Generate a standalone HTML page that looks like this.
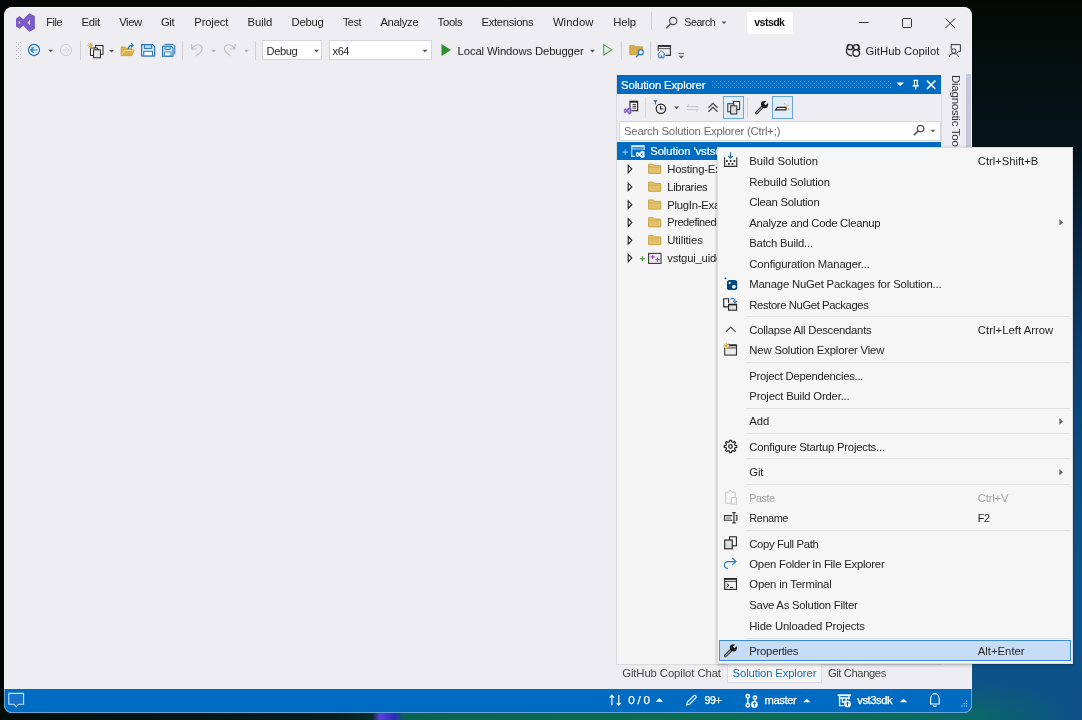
<!DOCTYPE html>
<html><head><meta charset="utf-8"><title>vstsdk - Microsoft Visual Studio</title>
<style>
html,body{margin:0;padding:0}
body{width:1082px;height:720px;position:relative;overflow:hidden;font:12px "Liberation Sans",sans-serif;
background:linear-gradient(to bottom,#030a06 0,#040d0a 40px,#05131a 150px,#082a4a 250px,#0b3f70 350px,#0c4a80 440px,#0e548c 600px,#0d5088 720px);}
.abs{position:absolute}
.t{position:absolute;transform-origin:0 0;white-space:pre;line-height:16px;font-size:11px}
svg{position:absolute;overflow:visible}
#win{position:absolute;left:0;top:0;width:1082px;height:720px;background:#eeeef2;clip-path:inset(7px 110px 7px 4px round 8px)}
.layer{position:absolute;left:0;top:0;width:1082px;height:720px;will-change:transform}
.sep{position:absolute;width:1px;background:#cfcfd8}
.msep{position:absolute;left:746px;width:324px;height:1px;background:#e2e2e5}
</style></head><body>
<div class="abs" style="left:0;top:0;width:14px;height:720px;background:#020705"></div>
<div class="abs" style="left:0;top:706px;width:990px;height:14px;background:linear-gradient(to right,#020d0a 0,#04201e 340px,#062c2c 372px,#5a40d6 380px,#2c2cba 394px,#0a6350 404px,#0b6c52 700px,#0a6a5c 900px,#0a6668 972px,rgba(10,98,112,.0) 990px)"></div>
<div class="abs" style="left:940px;top:640px;width:142px;height:80px;background:radial-gradient(ellipse 110px 40px at 30px 80px,rgba(10,104,100,.95) 0,rgba(10,100,110,.6) 50%,rgba(12,90,140,0) 100%)"></div>
<div id="win">
<!-- status bar -->
<div class="abs" style="left:4px;top:689px;width:968px;height:24px;background:#006cc1"></div>
<!-- solution explorer panel -->
<div class="abs" style="left:616px;top:75px;width:1px;height:590px;background:#dadae2"></div>
<div class="abs" style="left:617px;top:141px;width:324px;height:523px;background:#f5f5f5"></div>
<div class="abs" style="left:617px;top:664px;width:325px;height:1px;background:#dadae2"></div>
<div class="abs" style="left:941px;top:94px;width:1px;height:570px;background:#dadae2"></div>
<div class="abs" style="left:617px;top:75px;width:324px;height:19px;background:#006cc1"></div>
<div class="abs" style="left:619px;top:121px;width:320px;height:18px;background:#fff;border:1px solid #d4d5e0"></div>
<div class="abs" style="left:617px;top:142px;width:324px;height:18px;background:#006cc1"></div>
<!-- diag strip -->
<div class="abs" style="left:966px;top:74px;width:5px;height:100px;background:#c6c8da"></div>
<span class="t" style="left:964.2px;top:75.2px;color:#333;font-size:11.6px;transform-origin:0 0;transform:rotate(90deg);letter-spacing:-0.3px;will-change:transform">Diagnostic Tools</span>
<!-- menu title pieces -->
<div class="sep" style="left:651px;top:12px;height:18px"></div>
<div class="abs" style="left:747px;top:12px;width:46px;height:22px;background:#fff;border-radius:3px"></div>
<!-- toolbar combos -->
<div class="abs" style="left:262px;top:40px;width:60px;height:20px;background:#fff;border:1px solid #d4d5e0;box-sizing:border-box"></div>
<div class="abs" style="left:329px;top:40px;width:103px;height:20px;background:#fff;border:1px solid #d4d5e0;box-sizing:border-box"></div>
<div class="sep" style="left:80px;top:41px;height:19px"></div>
<div class="sep" style="left:182px;top:41px;height:19px"></div>
<div class="sep" style="left:255px;top:41px;height:19px"></div>
<div class="sep" style="left:621px;top:41px;height:19px"></div>
<div class="sep" style="left:650px;top:41px;height:19px"></div>
<!-- bottom tab -->
<div class="abs" style="left:727px;top:664px;width:95px;height:19px;background:#f5f5f5;border:1px solid #dadae2;border-top:none;box-sizing:border-box"></div>
<svg width="1082" height="720" viewBox="0 0 1082 720" style="left:0;top:0" fill="none" stroke-linecap="butt">
<defs>
<pattern id="dots" x="712" y="81" width="4" height="4" patternUnits="userSpaceOnUse"><rect x="0" y="0" width="1" height="1" fill="#5aa9ea"/><rect x="2" y="2" width="1" height="1" fill="#5aa9ea"/></pattern>
<pattern id="grip" x="16" y="42" width="4" height="4" patternUnits="userSpaceOnUse"><rect x="0" y="0" width="1" height="1" fill="#b4b4c0"/><rect x="2" y="2" width="1" height="1" fill="#b4b4c0"/></pattern>
</defs>
<!-- VS logo -->
<path fill="#7b5cc6" fill-rule="evenodd" d="M29.3,13.2 L34.9,16 V28.9 L29.3,31.7 L23.3,25.7 L19.6,28.8 L16,26.6 V18.7 L19.6,16.1 L23.3,19.3 Z M18.7,20.9 V24.3 L20.6,22.6 Z M27.5,22.5 L29.9,19.8 V25.2 Z"/>
<!-- window buttons -->
<path d="M859,22.5 H868.5" stroke="#333" stroke-width="1"/>
<rect x="902.5" y="18.5" width="9" height="9" rx="1" stroke="#333" stroke-width="1"/>
<path d="M945.5,18.5 L955,28 M955,18.5 L945.5,28" stroke="#333" stroke-width="1"/>
<!-- menubar search -->
<circle cx="673.2" cy="21" r="3.6" stroke="#444" stroke-width="1.1"/><path d="M670.6,23.8 L666.3,28.2" stroke="#444" stroke-width="1.3"/>
<path d="M721.5,21.5 h5 l-2.5,2.6 z" fill="#555"/>
<!-- toolbar grip -->
<rect x="16" y="42" width="5" height="17" fill="url(#grip)"/>
<!-- back / forward -->
<circle cx="34" cy="50" r="5.6" fill="#dcefff" stroke="#1c6db3" stroke-width="1.1"/>
<path d="M37.3,50 H31 M33.6,47.2 L30.8,50 L33.6,52.8" stroke="#1c6db3" stroke-width="1.1"/>
<path d="M48.2,49.7 h5 l-2.5,2.6 z" fill="#555"/>
<circle cx="66" cy="50" r="5.6" stroke="#c9c9d0" stroke-width="1"/>
<path d="M62.8,50 H69 M66.5,47.4 L69.1,50 L66.5,52.6" stroke="#d0d0d6" stroke-width="1"/>
<!-- new item -->
<rect x="95.5" y="45.5" width="7.5" height="8.8" fill="#f6f6f6" stroke="#2b2b2b" stroke-width="1"/>
<rect x="90.5" y="48" width="7" height="7.5" fill="#f6f6f6" stroke="#2b2b2b" stroke-width="1"/>
<rect x="93.5" y="49.8" width="7" height="8" fill="#e4e4e8" stroke="#2b2b2b" stroke-width="1"/>
<path d="M90.3,42.6 V48.6 M87.3,45.6 H93.3 M88.2,43.5 L92.4,47.7 M92.4,43.5 L88.2,47.7" stroke="#d9b233" stroke-width="1"/>
<path d="M109,50 h5 l-2.5,2.6 z" fill="#555"/>
<!-- open folder -->
<path d="M121.2,55.6 V47 H125.2 L126.2,48.3 H131.5 V50 H134.3 L131.8,55.6 Z" fill="#dcb247" stroke="#c59a2c" stroke-width=".8"/>
<path d="M122,55 L124.3,50.6 H133.6" stroke="#f3dc98" stroke-width=".9"/>
<path d="M128.2,49 C128.4,46.6 130,45.3 132.6,45.3 M131,43.3 L133.2,45.3 L131,47.3" stroke="#2a74b8" stroke-width="1.2"/>
<!-- save -->
<path d="M141.6,44.6 H152.6 L154.7,46.7 V56 H141.6 Z" fill="#d6e9fa" stroke="#1c6db3" stroke-width="1.1"/>
<rect x="144.3" y="44.8" width="7.4" height="3.6" fill="#bcd9f3" stroke="#1c6db3" stroke-width=".9"/>
<rect x="143.8" y="51.3" width="8.6" height="4.6" fill="#f4f9ff" stroke="#1c6db3" stroke-width=".9"/>
<!-- save all -->
<path d="M164.6,44.4 H173 L174.8,46.2 V54.2" stroke="#1c6db3" stroke-width="1"/>
<path d="M162.6,46.3 H171.2 L173,48.1 V56.2 H162.6 Z" fill="#d6e9fa" stroke="#1c6db3" stroke-width="1.1"/>
<rect x="165" y="46.5" width="5.2" height="3" fill="#bcd9f3" stroke="#1c6db3" stroke-width=".8"/>
<rect x="164.6" y="52" width="6.4" height="4" fill="#f4f9ff" stroke="#1c6db3" stroke-width=".8"/>
<!-- undo / redo -->
<path d="M191.6,44 V49 H196.6 M192,48.6 C194,45.2 198.4,43.6 200.8,45.6 C203.2,47.8 202.4,50.4 200,52.8 L196,56.2" stroke="#bdbdc6" stroke-width="1.1"/>
<path d="M211,49.8 h5 l-2.5,2.6 z" fill="#b4b4bc"/>
<path d="M235,44 V49 H230 M234.6,48.6 C232.6,45.2 228.2,43.6 225.8,45.6 C223.4,47.8 224.2,50.4 226.6,52.8 L230.6,56.2" stroke="#bdbdc6" stroke-width="1.1"/>
<path d="M244,49.8 h5 l-2.5,2.6 z" fill="#b4b4bc"/>
<!-- combo arrows -->
<path d="M314,49.8 h5 l-2.5,2.6 z" fill="#555"/>
<path d="M422.5,49.8 h5 l-2.5,2.6 z" fill="#555"/>
<!-- play -->
<path d="M441.5,44 L451,50 L441.5,56 Z" fill="#2f8f2f"/>
<path d="M590,49.8 h5 l-2.5,2.6 z" fill="#555"/>
<path d="M603.7,44.6 L612,49.8 L603.7,55 Z" fill="#e2f2e2" stroke="#58a058" stroke-width="1.1"/>
<!-- folder search -->
<path d="M629.8,54.6 V45.4 H634.2 L635.4,46.8 H642.4 V54.6 Z" fill="#dcae4e" stroke="#c9993a" stroke-width=".8"/>
<path d="M630.4,48.2 H642" stroke="#c9993a" stroke-width=".7"/>
<circle cx="640.8" cy="52.2" r="2.5" fill="#e6f2fc" stroke="#2a78c4" stroke-width="1.2"/><path d="M639,54 L636,57.2" stroke="#2a78c4" stroke-width="1.3"/>
<!-- window home -->
<path d="M658.2,45.5 H670.4 V55.4 H665.5 M658.2,45.5 V51" stroke="#333" stroke-width="1.1"/>
<path d="M658.2,46 H670.4" stroke="#333" stroke-width="2"/>
<path d="M658.6,48.6 H670" stroke="#333" stroke-width=".8"/>
<path d="M661.4,50.8 L665,54.2 H664 V57.8 H658.8 V54.2 H657.8 Z" fill="#e6f2fc" stroke="#2a78c4" stroke-width="1"/>
<rect x="660.6" y="55.4" width="1.6" height="2.4" fill="#2a78c4"/>
<path d="M678.4,53.6 H684" stroke="#666" stroke-width="1"/><path d="M678.4,55.8 h5.6 l-2.8,3 z" fill="#666"/>
<!-- copilot -->
<path d="M849.6,44.6 C847.4,44.6 846.8,46.2 847.2,48.2 C846.4,49.4 846.2,51 846.6,52.6 C847.4,54.6 849.6,55.6 852,55.8 M856.6,44.6 C858.8,44.6 859.4,46.2 859,48.2 C859.4,48.8 859.6,49.2 859.7,49.8" stroke="#2b2b2b" stroke-width="1.35"/>
<rect x="847.6" y="44.6" width="5" height="5" rx="2.2" stroke="#2b2b2b" stroke-width="1.35"/>
<rect x="853.6" y="44.6" width="5" height="5" rx="2.2" stroke="#2b2b2b" stroke-width="1.35"/>
<circle cx="856.2" cy="53" r="3.3" fill="#fafafc" stroke="#2b2b2b" stroke-width="1.35"/>
<!-- feedback person -->
<path d="M951.2,49.4 V44.6 H960.4 V51.6 H958.4 L956.8,53.4" stroke="#333" stroke-width="1"/>
<circle cx="953.8" cy="51" r="2.2" fill="#eeeef2" stroke="#333" stroke-width="1"/>
<path d="M949,57 C950,54.2 951.8,53.6 953.8,53.6 C955.8,53.6 957.6,54.2 958.6,57" stroke="#333" stroke-width="1"/>
<!-- SE title -->
<rect x="712" y="81" width="180" height="7" fill="url(#dots)"/>
<path d="M896.6,82.5 h7.4 l-3.7,3.8 z" fill="#fff"/>
<path d="M913.6,80.4 H918 M914.4,80.4 V85.6 M917.2,80.4 V85.6 M912.6,85.8 H919 M915.8,85.8 V89.6" stroke="#fff" stroke-width="1.2"/>
<path d="M927,80.6 L935.4,89 M935.4,80.6 L927,89" stroke="#fff" stroke-width="1.5"/>
<!-- SE toolbar -->
<rect x="630" y="101.3" width="7.6" height="9.4" fill="#f6f6f6" stroke="#222" stroke-width="1.1"/>
<path d="M630,101.8 H637.6" stroke="#222" stroke-width="1.8"/>
<path d="M632.6,104.6 H636 M632.6,106.4 H636 M632.6,108.2 H636" stroke="#222" stroke-width=".9"/>
<path fill="#8a5fd0" fill-rule="evenodd" stroke="#eeeef2" stroke-width="1.2" paint-order="stroke" transform="translate(623.9,107.1) scale(.4) translate(-16,-13.2)" d="M29.3,13.2 L34.9,16 V28.9 L29.3,31.7 L23.3,25.7 L19.6,28.8 L16,26.6 V18.7 L19.6,16.1 L23.3,19.3 Z M18.4,20.2 V25 L21.2,22.6 Z M26.6,22.5 L30.2,18.6 V26.4 Z"/>
<path d="M645.5,97 V118" stroke="#d6d6de" stroke-width="1"/>
<circle cx="660.9" cy="108.8" r="4.7" stroke="#222" stroke-width="1.2"/>
<path d="M660.6,105.8 V109 H663.4" stroke="#222" stroke-width="1.1"/>
<path d="M653,100.2 H657.8 L655.9,102.2 V104.6 H654.9 V102.2 Z" fill="#1c6db3"/>
<path d="M674,106.6 h5 l-2.5,2.6 z" fill="#555"/>
<path d="M698.4,106.5 H687 L689.4,104.2 M686.8,109.6 H698.2 L695.8,111.9" stroke="#c3c3cb" stroke-width="1"/>
<path d="M708.4,107.8 L713,103.4 L717.6,107.8 M708.4,111.8 L713,107.4 L717.6,111.8" stroke="#444" stroke-width="1.2"/>
<rect x="723.5" y="96.5" width="20" height="22" fill="#e1edf9" stroke="#6aa5df" stroke-width="1"/>
<rect x="733.4" y="101.6" width="6.2" height="8" fill="#f4f4f6" stroke="#2b2b2b" stroke-width="1"/>
<rect x="727.8" y="103.8" width="6" height="8" fill="#f4f4f6" stroke="#2b2b2b" stroke-width="1"/>
<rect x="730.6" y="105.8" width="6.2" height="8.2" fill="#dcdce0" stroke="#2b2b2b" stroke-width="1"/>
<path d="M747.5,97 V118" stroke="#d6d6de" stroke-width="1"/>
<path d="M763.0,106.2 L756.6,112.8" stroke="#2e2e2e" stroke-width="3" stroke-linecap="round"/><path d="M762.4,106.8 L756.6,112.8" stroke="#9aa0aa" stroke-width="1.1" stroke-linecap="round"/><circle cx="764.6" cy="104.6" r="3.6" fill="#1e1e1e"/><polygon points="765.70,105.13 764.07,103.50 767.61,99.97 769.23,101.59" fill="#eeeef2"/>
<rect x="772.5" y="96.5" width="20" height="22" fill="#e1edf9" stroke="#6aa5df" stroke-width="1"/>
<path d="M777.6,107.4 H786 V109.9 H775.4 Z" fill="#f4f4f4" stroke="#222" stroke-width="1.1"/>
<rect x="784" y="103.2" width="1.2" height="1.2" fill="#d9a520"/><rect x="787.6" y="104.8" width="1.2" height="1.2" fill="#d9a520"/><rect x="788" y="108.4" width="1.2" height="1.2" fill="#d9a520"/><rect x="786" y="105.6" width="1" height="1" fill="#d9a520"/>
<!-- SE search icon -->
<circle cx="920.6" cy="128.6" r="3.2" stroke="#555" stroke-width="1.3"/><path d="M918.2,131 L913.8,135.2" stroke="#555" stroke-width="1.6"/>
<path d="M930.4,129.8 h5 l-2.5,2.6 z" fill="#666"/>
<!-- tree: solution row -->
<path d="M625.2,149.4 V154.8 M622.5,152.1 H627.9" stroke="#7cc4ff" stroke-width="1.1"/>
<path d="M634.8,156.4 H631.8 V145.8 H644.2 V150" stroke="#cfe9ff" stroke-width="1.1"/>
<path d="M631.8,146.3 H644.2" stroke="#cfe9ff" stroke-width="2"/>
<path d="M632,149 H644" stroke="#cfe9ff" stroke-width=".9"/>
<path fill="#e6f3ff" fill-rule="evenodd" stroke="#006cc1" stroke-width="1.4" paint-order="stroke" transform="translate(635.9,150.6) scale(.46,.41) translate(-16,-13.2)" d="M29.3,13.2 L34.9,16 V28.9 L29.3,31.7 L23.3,25.7 L19.6,28.8 L16,26.6 V18.7 L19.6,16.1 L23.3,19.3 Z M18.4,20.2 V25 L21.2,22.6 Z M26.6,22.5 L30.2,18.6 V26.4 Z"/>
<path d="M628.2,165.2 V172.8 L631.8,169.0 Z" stroke="#1e1e1e" stroke-width="1.1" fill="#fff"/>
<path d="M648.6,173.4 V164.2 H653.4 L654.6,165.6 H660.8 V173.4 Z" fill="#e3c06c" stroke="#c79f3f" stroke-width=".9"/>
<path d="M649.2,167.2 H660.2" stroke="#cfa84a" stroke-width=".7"/>
<path d="M628.2,183.1 V190.7 L631.8,186.9 Z" stroke="#1e1e1e" stroke-width="1.1" fill="#fff"/>
<path d="M648.6,191.3 V182.1 H653.4 L654.6,183.5 H660.8 V191.3 Z" fill="#e3c06c" stroke="#c79f3f" stroke-width=".9"/>
<path d="M649.2,185.1 H660.2" stroke="#cfa84a" stroke-width=".7"/>
<path d="M628.2,200.9 V208.5 L631.8,204.7 Z" stroke="#1e1e1e" stroke-width="1.1" fill="#fff"/>
<path d="M648.6,209.1 V199.9 H653.4 L654.6,201.3 H660.8 V209.1 Z" fill="#e3c06c" stroke="#c79f3f" stroke-width=".9"/>
<path d="M649.2,202.9 H660.2" stroke="#cfa84a" stroke-width=".7"/>
<path d="M628.2,218.7 V226.3 L631.8,222.5 Z" stroke="#1e1e1e" stroke-width="1.1" fill="#fff"/>
<path d="M648.6,226.9 V217.7 H653.4 L654.6,219.1 H660.8 V226.9 Z" fill="#e3c06c" stroke="#c79f3f" stroke-width=".9"/>
<path d="M649.2,220.7 H660.2" stroke="#cfa84a" stroke-width=".7"/>
<path d="M628.2,236.5 V244.1 L631.8,240.3 Z" stroke="#1e1e1e" stroke-width="1.1" fill="#fff"/>
<path d="M648.6,244.7 V235.5 H653.4 L654.6,236.9 H660.8 V244.7 Z" fill="#e3c06c" stroke="#c79f3f" stroke-width=".9"/>
<path d="M649.2,238.5 H660.2" stroke="#cfa84a" stroke-width=".7"/>
<path d="M628.2,254.2 V261.8 L631.8,258.0 Z" stroke="#1e1e1e" stroke-width="1.1" fill="#fff"/>
<path d="M642.3,256.3 V261.3 M639.8,258.8 H644.8" stroke="#2f8f2f" stroke-width="1.1"/>
<rect x="648.6" y="253.4" width="12.4" height="10" fill="#f3e8f6" stroke="#3a3a3a" stroke-width="1.1"/>
<path d="M652.7,254.8 V259 M650.6,256.9 H654.8 M657.4,257.5 V261.7 M655.3,259.6 H659.5" stroke="#8a3fa0" stroke-width="1"/>
<!-- status bar -->
<path d="M8.8,693.4 H23.6 V704.2 H18.6 L16.2,706.8 L13.8,704.2 H8.8 Z" stroke="#bfe3ff" stroke-width="1.1" fill="#1872c8"/>
<path d="M611.9,705.2 V695.2 M609.8,697.6 L611.9,695.2 L614,697.6 M618.8,695 V705 M616.7,702.8 L618.8,705.2 L620.9,702.8" stroke="#fff" stroke-width="1.2"/>
<path d="M655.8,701.8 h7.2 l-3.6,-3.8 z" fill="#fff"/>
<path d="M686.6,705 L687.6,701.8 L694,695.6 C695,694.8 697,696.6 696,697.6 L689.8,704 Z" stroke="#fff" stroke-width="1.1"/>
<circle cx="747.8" cy="696.3" r="1.7" stroke="#fff" stroke-width="1.5"/><circle cx="747.8" cy="705.2" r="1.7" stroke="#fff" stroke-width="1.5"/><circle cx="755" cy="697.6" r="1.7" stroke="#fff" stroke-width="1.5"/>
<path d="M747.8,698 V703.6 M755,699.4 V700.8" stroke="#fff" stroke-width="1.4"/>
<circle cx="754.4" cy="704.4" r="3.4" fill="#fff"/><path d="M754.4,706.5 V702.6 M752.9,704.1 L754.4,702.6 L755.9,704.1" stroke="#006cc1" stroke-width="1"/>
<path d="M803.2,702.2 h7.2 l-3.6,-3.4 z" fill="#fff"/>
<path d="M837.6,695.2 H851" stroke="#fff" stroke-width="1.8"/>
<path d="M839.6,695 V705.6 H843.6 M849,695 V699.6 M838.8,698 H849.8 M842.4,698.4 V702 H846 V698.4" stroke="#fff" stroke-width="1.3"/>
<circle cx="847.5" cy="703.9" r="3.4" fill="#fff"/><path d="M847.5,706 V702.1 M846,703.6 L847.5,702.1 L849,703.6" stroke="#006cc1" stroke-width="1"/>
<path d="M899.8,702.2 h7.4 l-3.7,-3.4 z" fill="#fff"/>
<path d="M930.6,704 V699.6 C930.6,696 932.6,693.6 934.9,693.6 C937.2,693.6 939.2,696 939.2,699.6 V704 Z M933.4,705.6 C934,706.8 935.8,706.8 936.4,705.6" stroke="#fff" stroke-width="1.1"/>
<g fill="#a6cdf2"><rect x="966" y="700.6" width="1.2" height="1.2"/><rect x="963.6" y="703" width="1.2" height="1.2"/><rect x="966" y="703" width="1.2" height="1.2"/><rect x="961.2" y="705.4" width="1.2" height="1.2"/><rect x="963.6" y="705.4" width="1.2" height="1.2"/><rect x="966" y="705.4" width="1.2" height="1.2"/></g>
</svg>

<div class="layer"><span class="t" style="left:46.2px;top:14.2px;color:#242424;font-size:11.02px;letter-spacing:-0.420px;">File</span>
<span class="t" style="left:81.6px;top:14.1px;color:#242424;font-size:11.3px;letter-spacing:-0.290px;">Edit</span>
<span class="t" style="left:119.2px;top:14.1px;color:#242424;font-size:11.28px;letter-spacing:-0.420px;">View</span>
<span class="t" style="left:160.9px;top:14.1px;color:#242424;font-size:11.3px;letter-spacing:-0.319px;">Git</span>
<span class="t" style="left:194.3px;top:14.1px;color:#242424;font-size:11.3px;letter-spacing:-0.179px;">Project</span>
<span class="t" style="left:247.6px;top:14.1px;color:#242424;font-size:11.3px;letter-spacing:-0.131px;">Build</span>
<span class="t" style="left:291.6px;top:14.1px;color:#242424;font-size:11.3px;letter-spacing:-0.299px;">Debug</span>
<span class="t" style="left:342.9px;top:14.3px;color:#242424;font-size:10.78px;letter-spacing:-0.420px;">Test</span>
<span class="t" style="left:380.4px;top:14.1px;color:#242424;font-size:11.3px;letter-spacing:-0.317px;">Analyze</span>
<span class="t" style="left:437.6px;top:14.1px;color:#242424;font-size:11.3px;letter-spacing:-0.319px;">Tools</span>
<span class="t" style="left:481.6px;top:14.1px;color:#242424;font-size:11.3px;letter-spacing:-0.352px;">Extensions</span>
<span class="t" style="left:552.9px;top:14.1px;color:#242424;font-size:11.3px;letter-spacing:0.063px;">Window</span>
<span class="t" style="left:613.3px;top:14.1px;color:#242424;font-size:11.3px;letter-spacing:-0.178px;">Help</span>
<span class="t" style="left:684.3px;top:14.3px;color:#242424;font-size:10.6px;letter-spacing:-0.436px;">Search</span>
<span class="t" style="left:754.3px;top:14.3px;color:#111;font-size:10.6px;letter-spacing:-0.576px;font-weight:bold;">vstsdk</span>
<span class="t" style="left:266.6px;top:42.7px;color:#242424;font-size:11.12px;letter-spacing:-0.420px;">Debug</span>
<span class="t" style="left:332.6px;top:42.8px;color:#242424;font-size:10.94px;letter-spacing:-0.420px;">x64</span>
<span class="t" style="left:457.6px;top:42.7px;color:#242424;font-size:11.3px;letter-spacing:-0.125px;">Local Windows Debugger</span>
<span class="t" style="left:865.4px;top:42.7px;color:#242424;font-size:11.3px;letter-spacing:0.041px;">GitHub Copilot</span>
<span class="t" style="left:621.1px;top:77.1px;color:#fff;font-size:11.3px;letter-spacing:-0.108px;-webkit-text-stroke:.2px #fff;">Solution Explorer</span>
<span class="t" style="left:624.0px;top:122.9px;color:#6a6a6a;font-size:11.3px;letter-spacing:-0.204px;">Search Solution Explorer (Ctrl+;)</span>
<span class="t" style="left:622.2px;top:664.9px;color:#444;font-size:11.3px;letter-spacing:-0.093px;">GitHub Copilot Chat</span>
<span class="t" style="left:732.6px;top:664.9px;color:#1a6fb3;font-size:11.3px;letter-spacing:-0.139px;">Solution Explorer</span>
<span class="t" style="left:827.9px;top:664.9px;color:#444;font-size:11.28px;letter-spacing:-0.420px;">Git Changes</span>
<span class="t" style="left:628.3px;top:691.9px;color:#fff;font-size:11.8px;letter-spacing:-0.317px;-webkit-text-stroke:.25px #fff;">0 / 0</span>
<span class="t" style="left:704.4px;top:692.3px;color:#fff;font-size:10.69px;letter-spacing:-0.420px;-webkit-text-stroke:.25px #fff;">99+</span>
<span class="t" style="left:764.6px;top:692.1px;color:#fff;font-size:11.19px;letter-spacing:-0.420px;-webkit-text-stroke:.25px #fff;">master</span>
<span class="t" style="left:857.2px;top:692.1px;color:#fff;font-size:11.22px;letter-spacing:-0.420px;-webkit-text-stroke:.25px #fff;">vst3sdk</span>
<div class="abs" style="left:0;top:0;width:717px;height:720px;overflow:hidden"><span class="t" style="left:650.2px;top:143.1px;color:#fff;font-size:11.3px;letter-spacing:-0.078px;-webkit-text-stroke:.2px #fff;">Solution &#x27;vstsdk&#x27; (7 of 7 projects)</span>
<span class="t" style="left:667.3px;top:160.9px;color:#242424;font-size:11.3px;letter-spacing:-0.189px;">Hosting-Examples</span>
<span class="t" style="left:667.3px;top:178.7px;color:#242424;font-size:11.3px;letter-spacing:-0.366px;">Libraries</span>
<span class="t" style="left:667.3px;top:196.5px;color:#242424;font-size:11.3px;letter-spacing:-0.261px;">PlugIn-Examples</span>
<span class="t" style="left:667.3px;top:214.4px;color:#242424;font-size:10.97px;letter-spacing:-0.420px;">Predefined-Targets</span>
<span class="t" style="left:667.3px;top:232.1px;color:#242424;font-size:11.3px;letter-spacing:-0.113px;">Utilities</span>
<span class="t" style="left:667.3px;top:249.9px;color:#242424;font-size:11.3px;letter-spacing:-0.212px;">vstgui_uidescription</span></div></div>
</div>
<div class="abs" style="left:4px;top:7px;width:968px;height:706px;border-radius:8px;box-sizing:border-box;border:1px solid rgba(255,255,255,.4);pointer-events:none"></div>
<!-- context menu -->
<div id="menu" class="abs" style="left:717px;top:147px;width:356px;height:517px;background:#f6f6f6;box-shadow:0 1px 3px rgba(0,0,0,.32);border:1px solid #dcdce0;box-sizing:border-box"></div>
<div class="abs" style="left:719px;top:640px;width:352px;height:21px;background:#c7ddf5;border:1px solid #3c8ad6;box-sizing:border-box"></div>
<div class="msep" style="top:316px"></div>
<div class="msep" style="top:362px"></div>
<div class="msep" style="top:408px"></div>
<div class="msep" style="top:433px"></div>
<div class="msep" style="top:458px"></div>
<div class="msep" style="top:484px"></div>
<div class="msep" style="top:530px"></div>
<div class="msep" style="top:638px"></div>
<svg width="1082" height="720" viewBox="0 0 1082 720" style="left:0;top:0" fill="none">
<!-- build -->
<path d="M724.6,157.2 V166.4 H736.8 V157.2" stroke="#2b2b2b" stroke-width="1.1"/>
<g fill="#111"><rect x="726" y="160.2" width="1.7" height="1.7"/><rect x="729.8" y="160.2" width="1.7" height="1.7"/><rect x="733.5" y="160.2" width="1.7" height="1.7"/><rect x="728" y="163" width="1.7" height="1.7"/><rect x="731.7" y="163" width="1.7" height="1.7"/></g>
<path d="M730.5,152.3 V158 M728.2,155.8 L730.5,158.2 L732.8,155.8" stroke="#2b6ca8" stroke-width="1.2"/>
<!-- submenu arrows -->
<path d="M1059.4,219.2 V225.6 L1063,222.4 Z" fill="#666"/>
<path d="M1059.4,418.3 V424.7 L1063,421.5 Z" fill="#666"/>
<path d="M1059.4,469 V475.4 L1063,472.2 Z" fill="#666"/>
<!-- nuget -->
<rect x="727" y="280" width="10.2" height="10" rx="2.6" fill="#004880"/>
<circle cx="729.7" cy="282.9" r="1.1" fill="#e8f4ff"/><circle cx="733.9" cy="286.7" r="1.9" fill="#f4faff"/>
<circle cx="725.5" cy="278.4" r=".9" fill="#004880"/>
<!-- restore -->
<path d="M728.6,306.9 H723.7 V298.8 H728.6 V303" stroke="#222" stroke-width="1.1"/>
<rect x="728.6" y="304.4" width="8" height="5.8" fill="#e0e0e3" stroke="#222" stroke-width="1.1"/>
<path d="M728.6,304.6 H736.6" stroke="#222" stroke-width="1.6"/>
<path d="M730.6,299.4 C732.4,297.6 735.4,298.4 735,301.4 M733.2,300.8 L735,302.8 L736.8,300.8" stroke="#2a74b8" stroke-width="1.1"/>
<!-- collapse -->
<path d="M725.9,331.8 L730.7,327 L735.5,331.8" stroke="#444" stroke-width="1.1"/>
<!-- new view -->
<rect x="724.7" y="344.9" width="11.8" height="10.2" fill="#ececee" stroke="#333" stroke-width="1.1"/>
<path d="M724.7,345.4 H736.5" stroke="#333" stroke-width="1.8"/><path d="M725,348 H736.2" stroke="#333" stroke-width=".9"/>
<circle cx="726.2" cy="345.8" r="2.6" fill="#f6f6f6"/>
<path d="M726.2,342.6 V349 M723,345.8 H729.4 M724,343.6 L728.4,348 M728.4,343.6 L724,348" stroke="#d9b429" stroke-width="1"/>
<!-- gear -->
<g stroke="#2b2b2b" stroke-width="1.25" stroke-linejoin="round"><path d="M735.04,445.28 L736.74,445.62 L736.74,447.38 L735.04,447.72 L734.57,448.85 L735.53,450.29 L734.29,451.53 L732.85,450.57 L731.72,451.04 L731.38,452.74 L729.62,452.74 L729.28,451.04 L728.15,450.57 L726.71,451.53 L725.47,450.29 L726.43,448.85 L725.96,447.72 L724.26,447.38 L724.26,445.62 L725.96,445.28 L726.43,444.15 L725.47,442.71 L726.71,441.47 L728.15,442.43 L729.28,441.96 L729.62,440.26 L731.38,440.26 L731.72,441.96 L732.85,442.43 L734.29,441.47 L735.53,442.71 L734.57,444.15 Z"/><circle cx="730.5" cy="446.5" r="1.8"/></g>
<!-- paste -->
<path d="M731,503.2 H725.7 V492.2 H728.4 L730.2,490 L732,492.2 H735.2 V497" stroke="#c6c6c6" stroke-width="1"/>
<rect x="731.4" y="497.6" width="5" height="6.4" stroke="#c6c6c6" stroke-width="1"/>
<!-- rename -->
<path d="M732.4,515.6 H724.5 V520.3 H732.4 M735.6,515.6 H736.9 V520.3 H735.6" stroke="#333" stroke-width="1.1"/>
<path d="M726.2,518 H731" stroke="#999" stroke-width="1.6"/>
<path d="M734,512.8 V522.6 M732.3,512.6 H735.7 M732.3,522.8 H735.7" stroke="#333" stroke-width="1.2"/>
<!-- copy -->
<rect x="729.6" y="536.8" width="6.8" height="9" fill="#f8f8f8" stroke="#222" stroke-width="1.1"/>
<rect x="724.7" y="540" width="7.6" height="8.8" fill="#dedee2" stroke="#222" stroke-width="1.1"/>
<!-- open folder arrow -->
<path d="M728,568.4 C725.4,568.2 724.4,566.6 724.4,565.2 C724.4,563 726,561.6 728.4,561.6 H735.6 M732.4,558.2 L735.9,561.5 L732.4,564.8" stroke="#2a78c4" stroke-width="1.1"/>
<!-- terminal -->
<rect x="724.7" y="578.6" width="11.8" height="10.8" fill="#f2f2f4" stroke="#222" stroke-width="1.1"/>
<path d="M724.7,579 H736.5" stroke="#222" stroke-width="1.6"/><path d="M725,581.4 H736.2" stroke="#222" stroke-width=".8"/>
<path d="M726.8,583.6 L729,585.4 L726.8,587.2 M730,587.4 H732.8" stroke="#111" stroke-width="1"/>
<!-- properties wrench -->
<path d="M731.8,649.4 L725.4,655.8" stroke="#2e2e2e" stroke-width="3" stroke-linecap="round"/><path d="M731.2,650.0 L725.4,655.8" stroke="#9aa0aa" stroke-width="1.1" stroke-linecap="round"/><circle cx="733.4" cy="647.8" r="3.6" fill="#1e1e1e"/><polygon points="734.50,648.33 732.87,646.70 736.41,643.17 738.03,644.79" fill="#c7ddf5"/>
</svg>

<div class="layer"><span class="t" style="left:749.3px;top:153.1px;color:#242424;font-size:11.3px;letter-spacing:-0.030px;">Build Solution</span>
<span class="t" style="left:749.3px;top:173.6px;color:#242424;font-size:11.3px;letter-spacing:-0.105px;">Rebuild Solution</span>
<span class="t" style="left:749.3px;top:193.9px;color:#242424;font-size:11.3px;letter-spacing:-0.237px;">Clean Solution</span>
<span class="t" style="left:749.3px;top:214.6px;color:#242424;font-size:11.3px;letter-spacing:-0.276px;">Analyze and Code Cleanup</span>
<span class="t" style="left:749.3px;top:234.9px;color:#242424;font-size:11.3px;letter-spacing:-0.220px;">Batch Build...</span>
<span class="t" style="left:749.3px;top:255.6px;color:#242424;font-size:11.3px;letter-spacing:-0.131px;">Configuration Manager...</span>
<span class="t" style="left:749.3px;top:276.1px;color:#242424;font-size:11.3px;letter-spacing:-0.188px;">Manage NuGet Packages for Solution...</span>
<span class="t" style="left:749.3px;top:296.8px;color:#242424;font-size:11.3px;letter-spacing:-0.405px;">Restore NuGet Packages</span>
<span class="t" style="left:749.3px;top:321.9px;color:#242424;font-size:11.3px;letter-spacing:-0.248px;">Collapse All Descendants</span>
<span class="t" style="left:749.3px;top:342.3px;color:#242424;font-size:11.3px;letter-spacing:-0.164px;">New Solution Explorer View</span>
<span class="t" style="left:749.3px;top:367.8px;color:#242424;font-size:11.3px;letter-spacing:-0.262px;">Project Dependencies...</span>
<span class="t" style="left:749.3px;top:388.4px;color:#242424;font-size:11.3px;letter-spacing:-0.183px;">Project Build Order...</span>
<span class="t" style="left:749.3px;top:413.4px;color:#242424;font-size:11.3px;letter-spacing:-0.005px;">Add</span>
<span class="t" style="left:749.3px;top:438.9px;color:#242424;font-size:11.3px;letter-spacing:-0.222px;">Configure Startup Projects...</span>
<span class="t" style="left:749.3px;top:463.9px;color:#242424;font-size:11.3px;letter-spacing:-0.169px;">Git</span>
<span class="t" style="left:749.3px;top:490.0px;color:#a2a2a2;font-size:10.71px;letter-spacing:-0.420px;">Paste</span>
<span class="t" style="left:749.3px;top:510.2px;color:#242424;font-size:10.9px;letter-spacing:-0.420px;">Rename</span>
<span class="t" style="left:749.3px;top:535.6px;color:#242424;font-size:11.3px;letter-spacing:-0.361px;">Copy Full Path</span>
<span class="t" style="left:749.3px;top:555.9px;color:#242424;font-size:11.3px;letter-spacing:-0.218px;">Open Folder in File Explorer</span>
<span class="t" style="left:749.3px;top:576.3px;color:#242424;font-size:11.3px;letter-spacing:-0.187px;">Open in Terminal</span>
<span class="t" style="left:749.3px;top:597.3px;color:#242424;font-size:11.3px;letter-spacing:-0.239px;">Save As Solution Filter</span>
<span class="t" style="left:749.3px;top:617.8px;color:#242424;font-size:11.3px;letter-spacing:-0.142px;">Hide Unloaded Projects</span>
<span class="t" style="left:749.3px;top:642.8px;color:#242424;font-size:11.3px;letter-spacing:-0.256px;">Properties</span>
<span class="t" style="left:977.8px;top:153.1px;color:#242424;font-size:11.3px;letter-spacing:-0.037px;">Ctrl+Shift+B</span>
<span class="t" style="left:977.8px;top:321.9px;color:#242424;font-size:11.3px;letter-spacing:0.033px;">Ctrl+Left Arrow</span>
<span class="t" style="left:977.8px;top:489.8px;color:#a2a2a2;font-size:11.3px;letter-spacing:-0.201px;">Ctrl+V</span>
<span class="t" style="left:977.8px;top:510.3px;color:#242424;font-size:10.73px;letter-spacing:-0.420px;">F2</span>
<span class="t" style="left:977.8px;top:642.8px;color:#242424;font-size:11.3px;letter-spacing:0.000px;">Alt+Enter</span></div>
</body></html>
